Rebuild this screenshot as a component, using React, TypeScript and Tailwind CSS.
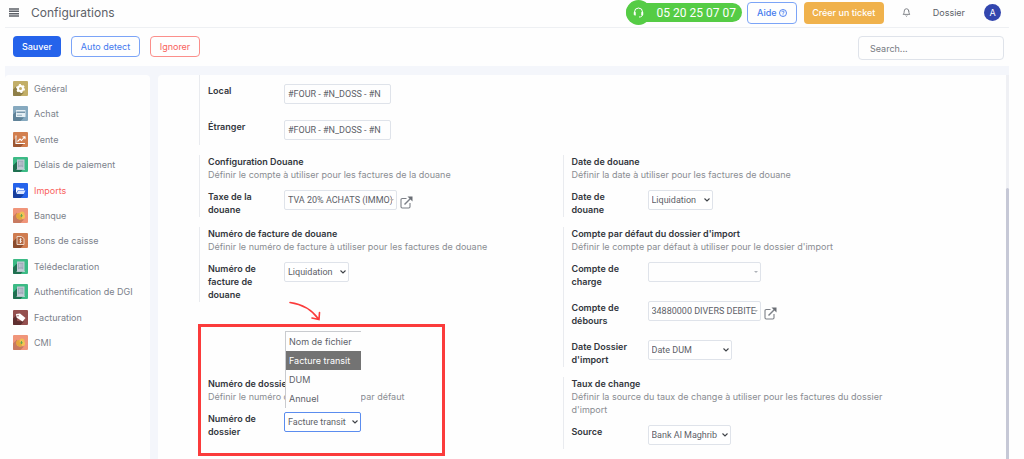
import type { ReactNode } from "react";
import { FiBell } from "react-icons/fi";

type IconKind = "gear" | "card" | "chart" | "building" | "folder" | "coin" | "receipt" | "tag";

const MENU: { label: string; icon: IconKind; active?: boolean }[] = [
  { label: "Général", icon: "gear" },
  { label: "Achat", icon: "card" },
  { label: "Vente", icon: "chart" },
  { label: "Délais de paiement", icon: "building" },
  { label: "Imports", icon: "folder", active: true },
  { label: "Banque", icon: "coin" },
  { label: "Bons de caisse", icon: "receipt" },
  { label: "Télédeclaration", icon: "building" },
  { label: "Authentification de DGI", icon: "building" },
  { label: "Facturation", icon: "tag" },
  { label: "CMI", icon: "coin" },
];

const ICONS: Record<IconKind, { bg: string; shadow: string; art: ReactNode }> = {
  gear: {
    bg: "#c2ae68",
    shadow: "#8f7f48",
    art: (
      <>
        <circle cx="15" cy="15" r="5" fill="none" stroke="#fff" strokeWidth="4" />
        <circle cx="15" cy="15" r="7.5" fill="none" stroke="#fff" strokeWidth="3" strokeDasharray="3.9 3.95" />
      </>
    ),
  },
  card: {
    bg: "#86a9bf",
    shadow: "#5f8298",
    art: (
      <>
        <rect x="6" y="8" width="19" height="14" rx="1" fill="#e6eff4" />
        <rect x="7" y="11" width="17" height="3" fill="#7897ab" />
        <path d="M8 18.500h10" stroke="#7897ab" strokeWidth="1.500" />
      </>
    ),
  },
  chart: {
    bg: "#d27f4f",
    shadow: "#9c5632",
    art: (
      <path
        d="M6 7v16h18M9 19l5-5 3 3 6-7M19 9.500h5v5"
        fill="none"
        stroke="#fff"
        strokeWidth="2.2"
      />
    ),
  },
  building: {
    bg: "#3cba85",
    shadow: "#1f6f50",
    art: (
      <>
        <rect x="8" y="5" width="15" height="20" fill="#c3cbd6" />
        <rect x="10.500" y="7.500" width="10" height="13" fill="#98a3b3" />
        <path d="M13 9v8M15.500 9v8M18 9v8M12 20h7M7 25h17" stroke="#d5dce5" strokeWidth="1.2" />
      </>
    ),
  },
  folder: {
    bg: "#2563eb",
    shadow: "#173f9e",
    art: (
      <>
        <path d="M6 21V9h6l2 2h8v3H10z" fill="#fff" />
        <path d="M10.500 15H25l-3.500 7H7z" fill="#dbe7ff" />
      </>
    ),
  },
  coin: {
    bg: "#f0957a",
    shadow: "#c87a60",
    art: (
      <>
        <circle cx="12" cy="16" r="6" fill="#e5a63c" />
        <circle cx="18" cy="12" r="5" fill="#efc055" />
        <circle cx="19" cy="17" r="5" fill="#f2c654" />
        <circle cx="14" cy="20" r="4" fill="#dfa940" />
        <path d="M17 12v6M14.500 15.500h5" stroke="#5ba650" strokeWidth="1.800" />
      </>
    ),
  },
  receipt: {
    bg: "#cf7c50",
    shadow: "#8b4c2d",
    art: (
      <>
        <path d="M8 7h9l5 4v12H8z" fill="#b56a43" stroke="#f3e2d6" strokeWidth="1.800" />
        <path d="M17.500 12.500c-4-1.500-5 1.500-2.500 2.500s2.500 4.500-2 3M15 10.500v9.500" fill="none" stroke="#fff" strokeWidth="1.500" />
      </>
    ),
  },
  tag: {
    bg: "#94504f",
    shadow: "#5f2f30",
    art: (
      <>
        <path d="M6 8l8-1 11 9-6 7L7 15z" fill="#fff" />
        <circle cx="10" cy="11.500" r="1.500" fill="#94504f" />
      </>
    ),
  },
};

function MenuIcon({ kind }: { kind: IconKind }) {
  const { bg, shadow, art } = ICONS[kind];
  return (
    <svg viewBox="0 0 30 30" className="size-[15px] shrink-0 rounded-[1px]" aria-hidden="true">
      <rect width="30" height="30" fill={bg} />
      <path d="M8 9v13l14 1-7 7H0V17z" fill={shadow} />
      {art}
    </svg>
  );
}

function Section({
  title,
  description,
  children,
}: {
  title: string;
  description: string;
  children: ReactNode;
}) {
  return (
    <section className="self-start border-l border-[#e9ebef] pl-2">
      <h2 className="font-semibold text-[#33373d]">{title}</h2>
      <p className="mb-[9px] max-w-80 text-[#8a8d92]">{description}</p>
      <div className="flex flex-col gap-3">{children}</div>
    </section>
  );
}

function Field({ id, label, children }: { id: string; label: string; children: ReactNode }) {
  return (
    <div className="flex min-h-6 items-start">
      <label htmlFor={id} className="w-[76px] shrink-0 pr-4 pb-px font-semibold text-[#33373d]">
        {label}
      </label>
      {children}
    </div>
  );
}

function TextField({ id, label, value }: { id: string; label: string; value: string }) {
  return (
    <Field id={id} label={label}>
      <input
        id={id}
        defaultValue={value}
        className="h-5 w-[107px] rounded-xs border border-[#dfe3ea] px-[3px] font-['Roboto',sans-serif] text-[#5d6168]"
      />
    </Field>
  );
}

function SelectField({
  id,
  label,
  options,
  width,
  focused = false,
  children,
}: {
  id: string;
  label: string;
  options: string[];
  width: string;
  focused?: boolean;
  children?: ReactNode;
}) {
  return (
    <Field id={id} label={label}>
      <div className={`relative ${width}`}>
        <select
          id={id}
          className={`h-5 w-full appearance-none rounded-xs border bg-white pr-2.5 pl-[3px] font-['Roboto',sans-serif] text-[#5d6168] ${
            focused ? "border-[#5b8def]" : "border-[#dfe3ea]"
          }`}
        >
          {options.map((option) => (
            <option key={option}>{option}</option>
          ))}
        </select>
        <svg
          viewBox="0 0 6 4"
          className="pointer-events-none absolute top-2 right-[3px] w-1.5"
          fill="none"
          stroke="#3f4348"
          strokeWidth="1.1"
        >
          <path d="M.5.5 3 3 5.500.5" />
        </svg>
        {children}
      </div>
    </Field>
  );
}

function AccountField({ id, label, value }: { id: string; label: string; value?: string }) {
  return (
    <Field id={id} label={label}>
      <div className="relative w-[113px]">
        <input
          id={id}
          defaultValue={value}
          className="h-5 w-full rounded-xs border border-[#dfe3ea] pr-1 pl-[3px] font-['Roboto',sans-serif] text-[#5d6168]"
        />
        <svg viewBox="0 0 4 2" className="pointer-events-none absolute top-[9px] right-[3px] w-1">
          <path d="M0 0h4L2 2z" fill="#aeb2b8" />
        </svg>
      </div>
      {value && (
        <a href="#" aria-label="Ouvrir le compte" className="mt-1.5 ml-[3px]">
          <svg viewBox="0 0 26 26" className="size-[13px]" fill="none" stroke="#7b7f86" strokeWidth="2.2">
            <path d="M13 5H4.500Q2 5 2 7.500v14Q2 24 4.500 24h13q2.500 0 2.500-2.500V14" />
            <path d="M9 17 21 5" strokeWidth="3" />
            <path d="M15 1h10v10z" fill="#6a6e75" stroke="none" />
          </svg>
        </a>
      )}
    </Field>
  );
}

function DossierMenu() {
  const items = ["Nom de fichier", "Facture transit", "DUM", "Annuel"];
  return (
    <ul
      role="listbox"
      aria-label="Numéro de dossier"
      className="absolute right-0 bottom-6 z-10 w-[76px] border-t border-l border-[#c9cbcf] bg-[#fefefe] text-[#5d6168]"
    >
      {items.map((item) => (
        <li
          key={item}
          role="option"
          aria-selected={item === "Facture transit"}
          className={`flex h-[19px] items-center px-[3px] whitespace-nowrap ${
            item === "Facture transit" ? "bg-[#737373] text-white" : ""
          }`}
        >
          {item}
        </li>
      ))}
    </ul>
  );
}

function Header() {
  return (
    <header className="flex h-7 items-center border-b border-[#eef0f3] pr-2 pb-0.5 pl-1">
      <button aria-label="Menu">
        <svg viewBox="0 0 10 9" className="w-2.5" stroke="#5d6168" strokeWidth="1.500">
          <path d="M0 1h10M0 3.300h10M0 5.700h10M0 8h10" />
        </svg>
      </button>
      <h1 className="ml-3 text-xs text-[#5d6168]">Configurations</h1>
      <a
        href="tel:0520250707"
        className="ml-auto flex h-[19px] w-[116px] items-center rounded-full bg-[#55cc45] font-['Roboto',sans-serif] text-xs text-white"
      >
        <span className="flex size-[25px] shrink-0 items-center justify-center rounded-full bg-[#55cc45]">
          <svg viewBox="0 0 22 22" className="size-[11px]" fill="none" stroke="#fff" strokeWidth="2">
            <path d="M3 12V10a8 8 0 0 1 16 0v2M19 15c0 4-3 5-7 5" />
            <path d="M2 10.500h3v6H4q-2 0-2-2zM20 10.500h-3v6h1q2 0 2-2z" fill="#fff" strokeWidth="1" />
          </svg>
        </span>
        <span className="flex-1 text-center whitespace-nowrap">05 20 25 07 07</span>
      </a>
      <button className="ml-[5px] flex h-[22px] w-[50px] items-center justify-center gap-0.5 rounded-sm border border-[#7ba4f7] font-medium text-[#4379ee]">
        Aide
        <svg viewBox="0 0 16 16" className="size-2" fill="none" stroke="currentColor" strokeWidth="1.800">
          <circle cx="8" cy="8" r="7" />
          <path d="M5.800 6.300c0-3 4.400-2.800 4.400-.2C10.200 7.800 8 7.700 8 9.500M8 11v1.500" />
        </svg>
      </button>
      <button className="ml-[7px] h-[22px] w-20 rounded-sm bg-[#f0b24c] font-medium text-white">
        Créer un ticket
      </button>
      <button aria-label="Notifications" className="ml-[18px]">
        <FiBell className="size-[9px] text-[#5d6168]" />
      </button>
      <a href="#" className="ml-[22px] text-[#5d6168]">
        Dossier
      </a>
      <button className="ml-[19px] size-[17px] rounded-full bg-[#3346ae] text-white">A</button>
    </header>
  );
}

export default function App() {
  return (
    <div className="flex min-h-screen bg-[#fefefe] pr-[15px] pl-[5px] font-['Inter',sans-serif] text-[9px] leading-[13px]">
      <div className="flex flex-1 flex-col bg-[#f4f6fb]">
        <div className="bg-[#fefefe]">
          <Header />
          <div className="flex h-[38px] items-start gap-[10px] pt-2 pr-[5px] pl-2">
            <button className="h-[21px] w-12 rounded-sm bg-[#2563eb] font-medium text-white">Sauver</button>
            <button className="h-[21px] w-[69px] rounded-sm border border-[#7ba4f7] text-[#4379ee]">
              Auto detect
            </button>
            <button className="h-[21px] w-[50px] rounded-sm border border-[#fb8f8b] text-[#f9625d]">
              Ignorer
            </button>
            <input
              type="search"
              aria-label="Search"
              placeholder="Search..."
              className="ml-auto h-6 w-[146px] rounded-sm border border-[#dfe3ea] px-[11px] placeholder:text-[#777b82]"
            />
          </div>
        </div>

        <div className="mt-[9px] flex flex-1 gap-2">
          <nav className="w-[145px] shrink-0 rounded-t bg-[#fefefe] px-2 pt-1.5">
            <ul className="flex h-[269px] flex-col justify-between">
              {MENU.map((item) => (
                <li key={item.label}>
                  <a
                    href="#"
                    className={`flex items-center gap-1.5 whitespace-nowrap ${
                      item.active ? "text-[#f9625d]" : "text-[#7b818b]"
                    }`}
                  >
                    <MenuIcon kind={item.icon} />
                    {item.label}
                  </a>
                </li>
              ))}
            </ul>
          </nav>

          <main className="flex flex-1 rounded-t bg-[#fefefe]">
            <div className="grid flex-1 grid-cols-2 content-start gap-y-[10px] pr-20 pb-2 pl-[41px]">
              <div className="col-span-2 border-l border-[#e9ebef] pt-[9px] pb-px pl-2">
                <div className="flex flex-col gap-3">
                  <TextField id="local" label="Local" value="#FOUR - #N_DOSS - #N" />
                  <TextField id="etranger" label="Étranger" value="#FOUR - #N_DOSS - #N" />
                </div>
              </div>

              <Section
                title="Configuration Douane"
                description="Définir le compte à utiliser pour les factures de la douane"
              >
                <AccountField id="taxe" label="Taxe de la douane" value="TVA 20% ACHATS (IMMO)" />
              </Section>
              <Section
                title="Date de douane"
                description="Définir la date à utiliser pour les factures de douane"
              >
                <SelectField id="date-douane" label="Date de douane" options={["Liquidation"]} width="w-[65px]" />
              </Section>

              <Section
                title="Numéro de facture de douane"
                description="Définir le numéro de facture à utiliser pour les factures de douane"
              >
                <SelectField
                  id="facture-douane"
                  label="Numéro de facture de douane"
                  options={["Liquidation"]}
                  width="w-[65px]"
                />
              </Section>
              <Section
                title="Compte par défaut du dossier d'import"
                description="Définir le compte par défaut à utiliser pour le dossier d'import"
              >
                <AccountField id="charge" label="Compte de charge" />
                <AccountField id="debours" label="Compte de débours" value="34880000 DIVERS DEBITEURS" />
                <SelectField
                  id="date-dossier"
                  label="Date Dossier d'import"
                  options={["Date DUM"]}
                  width="w-[84px]"
                />
              </Section>

              <div className="relative self-start">
                <Section title="Numéro de dossier" description="Définir le numéro de dossier import par défaut">
                  <SelectField
                    id="numero-dossier"
                    label="Numéro de dossier"
                    options={["Facture transit"]}
                    width="w-[77px]"
                    focused
                  >
                    <DossierMenu />
                  </SelectField>
                </Section>
                <div className="pointer-events-none absolute -top-[53px] -left-px h-[132px] w-[247px] border-[3px] border-[#fb3b3b]" />
                <svg
                  viewBox="0 0 32 20"
                  className="pointer-events-none absolute -top-[76px] left-[90px] w-8"
                  fill="none"
                  stroke="#fb3b3b"
                  strokeWidth="1.600"
                  strokeLinecap="round"
                >
                  <path d="M1 1.500C12 3 23 9 29.500 18M30.500 11.500 30 18.500 23 17" />
                </svg>
              </div>
              <Section
                title="Taux de change"
                description="Définir la source du taux de change à utiliser pour les factures du dossier d'import"
              >
                <SelectField id="source" label="Source" options={["Bank Al Maghrib"]} width="w-[83px]" />
              </Section>
            </div>
            <div className="flex w-[3px] flex-col bg-[#eff0f4]">
              <div className="mt-[113px] flex-1 rounded-t-sm bg-[#c6c8d6]" />
            </div>
          </main>
        </div>
      </div>
    </div>
  );
}
